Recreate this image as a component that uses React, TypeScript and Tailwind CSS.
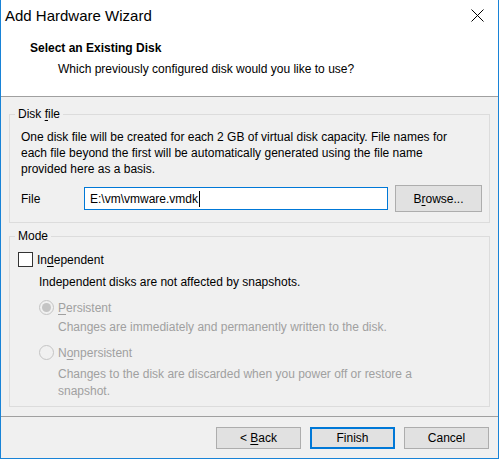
import { ReactNode } from "react";

const FONT = { fontFamily: '"Liberation Sans", Arial, sans-serif' };

// mnemonic letter, as Windows draws access keys
function Key({ children }: { children: ReactNode }) {
  return <span className="underline underline-offset-[2px]">{children}</span>;
}

function Button({ children, primary = false }: { children: ReactNode; primary?: boolean }) {
  return (
    <button
      className={
        primary
          ? "w-[85px] h-[22px] bg-[#e1e1e1] border-2 border-[#0078d7] text-black text-[12px] leading-none"
          : "w-[85px] h-[22px] bg-[#e1e1e1] border border-[#adadad] text-black text-[12px] leading-none"
      }
    >
      {children}
    </button>
  );
}

function Radio({ checked }: { checked?: boolean }) {
  return (
    <span className="w-[15px] h-[15px] rounded-full border border-[#c4c4c4] bg-[#f0f0f0] flex items-center justify-center shrink-0">
      {checked && <span className="w-[9px] h-[9px] rounded-full bg-[#c4c4c4]" />}
    </span>
  );
}

export default function App() {
  return (
    <div
      style={FONT}
      className="w-[499px] h-[459px] bg-[#f0f0f0] border-x border-b border-[#1883d7] flex flex-col text-[12px] text-black"
    >
      {/* title bar + page header */}
      <div className="bg-white border-b border-[#a0a0a0]">
        <div className="h-[32px] flex items-center justify-between pl-[4px] pr-[14px]">
          <span className="text-[15px]">Add Hardware Wizard</span>
          <svg width="13" height="13" viewBox="0 0 13 13" className="mb-[2px]">
            <path d="M0.5 0.5 L12.5 12.5 M12.5 0.5 L0.5 12.5" stroke="#000" strokeWidth="1" />
          </svg>
        </div>
        <div className="h-[64px] pl-[29px] pt-[8px] leading-[16px]">
          <div className="font-bold">Select an Existing Disk</div>
          <div className="pl-[28px] mt-[5px]">Which previously configured disk would you like to use?</div>
        </div>
      </div>

      {/* disk file group */}
      <fieldset className="ml-[8px] mt-[9px] w-[481px] border border-[#dcdcdc] pl-[11px] pt-[7px] pb-[10px]">
        <legend className="-ml-[6px] px-[3px] leading-[16px]">
          Disk <Key>f</Key>ile
        </legend>
        <p className="leading-[16px]">
          One disk file will be created for each 2 GB of virtual disk capacity. File names for
          <br />
          each file beyond the first will be automatically generated using the file name
          <br />
          provided here as a basis.
        </p>
        <div className="flex items-center mt-[8px]">
          <span className="w-[63px]">File</span>
          <div className="w-[304px] h-[23px] bg-white border border-[#0078d7] flex items-center pl-[5px]">
            <span>E:\vm\vmware.vmdk</span>
            <span className="w-px h-[16px] bg-black ml-px" />
          </div>
          <button className="ml-[7px] w-[87px] h-[27px] bg-[#e1e1e1] border border-[#adadad] text-[12px]">
            B<Key>r</Key>owse...
          </button>
        </div>
      </fieldset>

      {/* mode group */}
      <fieldset className="ml-[8px] mt-[5px] w-[481px] border border-[#dcdcdc] pl-[8px] pt-[8px] pb-[6px]">
        <legend className="-ml-[3px] px-[3px] leading-[16px]">Mode</legend>
        <label className="flex items-center h-[15px]">
          <span className="w-[15px] h-[15px] border border-[#333333] bg-white shrink-0" />
          <span className="ml-[4px]">
            In<Key>d</Key>ependent
          </span>
        </label>
        <div className="pl-[21px] mt-[7px] leading-[16px]">Independent disks are not affected by snapshots.</div>

        <div className="pl-[21px] text-[#a0a0a0]">
          <div className="flex items-center mt-[10px] h-[15px]">
            <Radio checked />
            <span className="ml-[4px]">
              <Key>P</Key>ersistent
            </span>
          </div>
          <div className="pl-[19px] mt-[4px] leading-[16px]">
            Changes are immediately and permanently written to the disk.
          </div>
          <div className="flex items-center mt-[10px] h-[15px]">
            <Radio />
            <span className="ml-[4px]">
              N<Key>o</Key>npersistent
            </span>
          </div>
          <div className="pl-[19px] mt-[6px] leading-[17px]">
            Changes to the disk are discarded when you power off or restore a
            <br />
            snapshot.
          </div>
        </div>
      </fieldset>

      {/* wizard buttons */}
      <div className="mt-[9px] border-t border-[#a0a0a0] flex justify-end gap-[9px] pr-[9px] pt-[10px]">
        <Button>
          &lt; <Key>B</Key>ack
        </Button>
        <Button primary>Finish</Button>
        <Button>Cancel</Button>
      </div>
    </div>
  );
}
